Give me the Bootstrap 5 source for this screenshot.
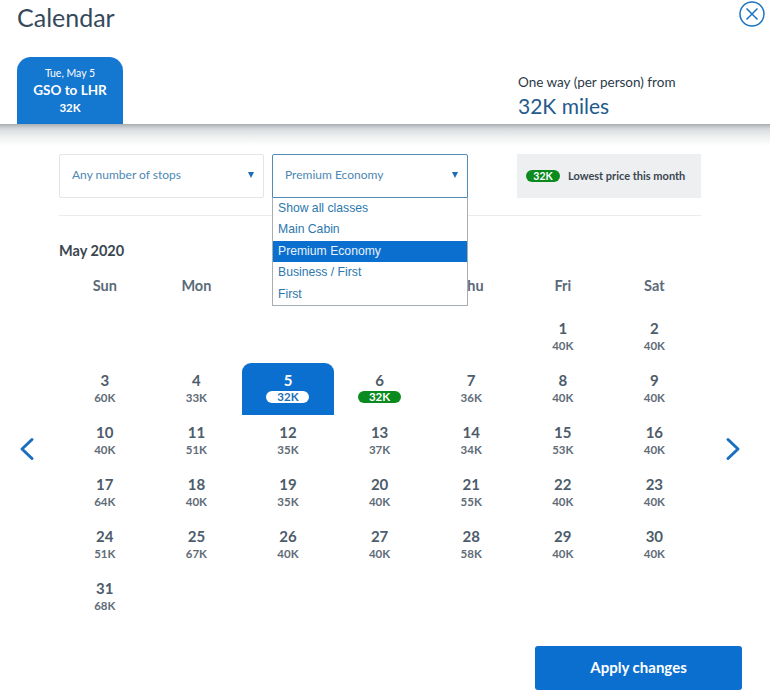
<!DOCTYPE html>
<html lang="en">
<head>
    <meta charset="UTF-8">
    <meta name="viewport" content="width=device-width, initial-scale=1.0">
    <title>Calendar</title>
    <link href="https://cdn.jsdelivr.net/npm/bootstrap@5.3.0/dist/css/bootstrap.min.css" rel="stylesheet">
    <style>
        body {
            background-color: #fff;
            font-family: "Lato", "Open Sans", sans-serif;
            color: #36495a;
            overflow: hidden;
        }
        .top-area {
            height: 124px;
            padding-left: 17px;
            padding-right: 5px;
        }
        .page-title {
            font-size: 25px;
            line-height: 34px;
            color: #36495a;
            font-weight: 400;
            margin: 0;
        }
        .close-btn {
            width: 26px;
            height: 26px;
            margin-top: 1px;
        }
        .trip-tab {
            width: 106px;
            height: 67px;
            background-color: #1477d0;
            color: #fff;
            border-radius: 14px 14px 0 0;
            text-align: center;
            padding-top: 9px;
            margin-top: 23px;
        }
        .trip-date { font-size: 10.5px; line-height: 14px; }
        .trip-route { font-size: 13.5px; line-height: 20px; font-weight: 700; }
        .trip-price { font-size: 11.5px; line-height: 16px; font-weight: 700; }
        .fare-box { margin-left: 395px; margin-top: 39px; }
        .fare-label { font-size: 13.5px; line-height: 18px; color: #2b3a48; }
        .fare-value { font-size: 21px; line-height: 30px; color: #235a8c; }
        .shade {
            height: 22px;
            background: linear-gradient(#a9afb4 0, #d8dbde 5px, #f1f2f3 14px, #fff 22px);
        }
        .filter-wrap { width: 642px; margin-left: 59px; }
        .filters { padding-top: 8px; }
        .fake-select {
            height: 44px;
            border: 1px solid #e3e6e8;
            border-radius: 2px;
            font-size: 12px;
            color: #4d87b3;
            padding: 0 9px 2px 12px;
        }
        .stops-select { width: 205px; }
        .class-select {
            width: 196px;
            margin-left: 8px;
            border-color: #4f8cb5;
            border-radius: 2px 2px 0 0;
        }
        .caret {
            width: 0;
            height: 0;
            border-left: 3.5px solid transparent;
            border-right: 3.5px solid transparent;
            border-top: 6px solid #1a6eb5;
        }
        .class-menu {
            position: absolute;
            top: 52px;
            left: 213px;
            width: 196px;
            background: #fff;
            border: 1px solid #a6adb3;
            border-top: 0;
            z-index: 5;
            font-family: "Liberation Sans", Arial, sans-serif;
            font-size: 12.2px;
            color: #2c78ad;
        }
        .class-menu div {
            height: 21.4px;
            line-height: 21.4px;
            padding-left: 5px;
        }
        .class-menu .picked { background: #0b6fd0; color: #e8f2fb; }
        .legend-box {
            width: 184px;
            height: 44px;
            margin-left: 49px;
            background: #edeff0;
            font-size: 11px;
            font-weight: 700;
            color: #3b4650;
            padding-left: 9px;
            gap: 8px;
        }
        .green-pill {
            background: #0b8a1f;
            color: #fff;
            border-radius: 8px;
            font-size: 10.5px;
            font-weight: 700;
            line-height: 12px;
            width: 34px;
            text-align: center;
        }
        .divider { height: 1px; background: #e9ebed; margin-top: 17px; }
        .month-name {
            font-size: 14.5px;
            line-height: 20px;
            font-weight: 700;
            color: #3b4650;
            margin-top: 25px;
        }
        .cal-grid {
            display: grid;
            grid-template-columns: repeat(7, 91.6px);
        }
        .day-head {
            text-align: center;
            font-size: 14.5px;
            line-height: 20px;
            font-weight: 700;
            color: #5a6a78;
            margin-top: 15px;
            height: 35px;
        }
        .day-cell {
            height: 52px;
            text-align: center;
            padding-top: 8px;
            color: #4d5c6a;
        }
        .day-num { font-size: 15px; line-height: 18px; font-weight: 700; }
        .day-price { font-size: 11.5px; line-height: 15px; font-weight: 700; color: #5f6c78; margin-top: 1px; }
        .day-cell.chosen {
            background: #0b6fd0;
            border-radius: 9px 9px 0 0;
            color: #fff;
        }
        .price-pill {
            display: block;
            width: 43px;
            height: 12px;
            line-height: 12px;
            border-radius: 7px;
            margin: 2px auto 0;
            font-size: 11.5px;
            font-weight: 700;
        }
        .chosen .price-pill { background: #fff; color: #1d6fb8; }
        .low .price-pill { background: #0b8a1f; color: #fff; }
        .arrow-left, .arrow-right { padding-top: 58px; }
        .arrow-left { width: 59px; padding-right: 5px; }
        .arrow-right { width: 69px; padding-right: 4px; }
        .apply-row { padding-right: 28px; margin-top: 23px; }
        .apply-btn {
            width: 207px;
            height: 44px;
            background: #0b6fd0;
            border: 0;
            border-radius: 3px;
            color: #fff;
            font-size: 15px;
            font-weight: 700;
            padding-bottom: 2px;
        }
    </style>
</head>
<body>
    <div class="top-area">
        <div class="d-flex justify-content-between">
            <h1 class="page-title">Calendar</h1>
            <svg class="close-btn" viewBox="0 0 26 26" fill="none" stroke="#1a73c0" stroke-width="1.5">
                <circle cx="13" cy="13" r="12"/>
                <path d="M7.5 7.5l11 11M18.5 7.5l-11 11"/>
            </svg>
        </div>
        <div class="d-flex">
            <div class="trip-tab">
                <div class="trip-date">Tue, May 5</div>
                <div class="trip-route">GSO to LHR</div>
                <div class="trip-price">32K</div>
            </div>
            <div class="fare-box">
                <div class="fare-label">One way (per person) from</div>
                <div class="fare-value">32K miles</div>
            </div>
        </div>
    </div>
    <div class="shade"></div>

    <div class="filter-wrap position-relative">
        <div class="filters d-flex">
            <div class="fake-select stops-select d-flex align-items-center justify-content-between">
                <span>Any number of stops</span><span class="caret"></span>
            </div>
            <div class="fake-select class-select d-flex align-items-center justify-content-between">
                <span>Premium Economy</span><span class="caret"></span>
            </div>
            <div class="legend-box d-flex align-items-center">
                <span class="green-pill">32K</span><span>Lowest price this month</span>
            </div>
        </div>
        <!-- open dropdown, lies over the calendar -->
        <div class="class-menu">
            <div>Show all classes</div>
            <div>Main Cabin</div>
            <div class="picked">Premium Economy</div>
            <div>Business / First</div>
            <div>First</div>
        </div>
        <div class="divider"></div>
    </div>

    <div class="d-flex">
        <div class="arrow-left d-flex align-items-center justify-content-center">
            <svg width="16" height="24" viewBox="0 0 16 24" fill="none" stroke="#1a6fc0" stroke-width="3" stroke-linecap="round" stroke-linejoin="round">
                <path d="M13 2.5L3 12l10 9.5"/>
            </svg>
        </div>
        <div>
            <div class="month-name">May 2020</div>
            <div class="cal-grid" id="calGrid"></div>
        </div>
        <div class="arrow-right d-flex align-items-center justify-content-center">
            <svg width="16" height="24" viewBox="0 0 16 24" fill="none" stroke="#1a6fc0" stroke-width="3" stroke-linecap="round" stroke-linejoin="round">
                <path d="M3 2.5L13 12 3 21.5"/>
            </svg>
        </div>
    </div>

    <div class="apply-row d-flex justify-content-end">
        <button type="button" class="apply-btn">Apply changes</button>
    </div>

    <script>
        const weekdays = ["Sun", "Mon", "Tue", "Wed", "Thu", "Fri", "Sat"];
        const prices = [40, 40, 60, 33, 32, 32, 36, 40, 40, 40, 51, 35, 37, 34, 53, 40, 64, 40, 35, 40, 55, 40, 40, 51, 67, 40, 40, 58, 40, 40, 68];
        const grid = document.getElementById("calGrid");

        weekdays.forEach(name => {
            grid.insertAdjacentHTML("beforeend", `<div class="day-head">${name}</div>`);
        });
        // May 2020 starts on a Friday
        for (let i = 0; i < 5; i++) {
            grid.insertAdjacentHTML("beforeend", `<div></div>`);
        }
        prices.forEach((price, index) => {
            const day = index + 1;
            let cls = "day-cell";
            let label = `<div class="day-price">${price}K</div>`;
            if (day === 5 || day === 6) {
                cls += day === 5 ? " chosen" : " low";
                label = `<span class="price-pill">${price}K</span>`;
            }
            grid.insertAdjacentHTML("beforeend", `<div class="${cls}"><div class="day-num">${day}</div>${label}</div>`);
        });
    </script>
    <script src="https://cdn.jsdelivr.net/npm/bootstrap@5.3.0/dist/js/bootstrap.bundle.min.js"></script>
</body>
</html>
